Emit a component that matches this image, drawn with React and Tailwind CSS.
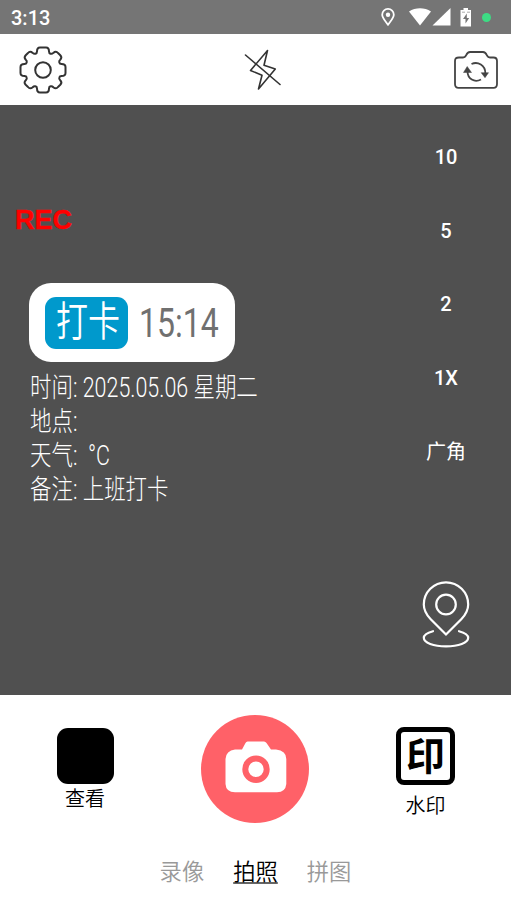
import { useState } from 'react'

const ZOOM_LEVELS = ['10', '5', '2', '1X', '广角']
const MODES = ['录像', '拍照', '拼图']
const INFO = ['时间: 2025.05.06 星期二', '地点:', '天气:  °C', '备注: 上班打卡']

function StatusBar() {
  return (
    <div className="flex h-[34px] items-center bg-[#757575] pl-[11px] pr-[20px] text-white">
      <span className="pt-px text-[20px] font-medium leading-none">3:13</span>
      <svg className="ml-auto h-[18px] w-[14px]" viewBox="0 0 14 18" fill="none" stroke="currentColor" strokeWidth="1.800">
        <path d="M7 16.700C4.200 12.800 1.200 9.800 1.200 6.700a5.800 5.800 0 0 1 11.600 0c0 3.100-3 6.100-5.800 10Z" />
        <circle cx="7" cy="6.700" r="2.200" fill="currentColor" stroke="none" />
      </svg>
      <svg className="ml-[14px] h-[18px] w-[42px]" viewBox="0 0 42 18" fill="currentColor">
        <path d="M0 3.500C6.500-.9 15.500-.9 22 3.500L11 17.500Z" />
        <path d="M41.500 0v17.500H23.500Z" />
      </svg>
      <svg className="ml-[9px] h-[19px] w-[12px]" viewBox="0 0 12 19">
        <path d="M3.500 0h4.500v2H11v16.500H.5V2h3Z" fill="#fff" />
        <path d="M6.800 5.500 3 11h2.500v4.500L9.200 10H6.800Z" fill="#757575" />
        <path d="M2 4.200h3M7 4.200h3" stroke="#757575" strokeWidth="0.600" />
      </svg>
      <span className="ml-[10px] h-[9px] w-[9px] rounded-full bg-[#3ddc84]" />
    </div>
  )
}

function GearIcon() {
  return (
    <svg className="h-[48px] w-[48px]" viewBox="0 0 48 48" fill="none" stroke="#333" strokeWidth="2" strokeLinejoin="round">
      <path d="M18 5.500Q18 1.500 21 1.500H27Q30 1.500 30 5.500Q30 7.300 31.500 7.700Q33 8.200 34.300 6.900Q37 4.500 39 7L41.300 9.300Q43.500 11.500 41.200 13.800Q39.800 15 40.300 16.500Q40.700 18 42.500 18Q46.500 18 46.500 21V27Q46.500 30 42.500 30Q40.700 30 40.300 31.500Q39.800 33 41.200 34.300Q43.500 36.500 41.300 38.800L39 41Q37 43.500 34.300 41.200Q33 39.800 31.500 40.300Q30 40.700 30 42.500Q30 46.500 27 46.500H21Q18 46.500 18 42.500Q18 40.700 16.500 40.300Q15 39.800 13.700 41.200Q11 43.500 9 41L6.700 38.800Q4.500 36.500 6.800 34.300Q8.200 33 7.700 31.500Q7.300 30 5.500 30Q1.500 30 1.500 27V21Q1.500 18 5.500 18Q7.300 18 7.700 16.500Q8.200 15 6.800 13.800Q4.500 11.500 6.700 9.300L9 7Q11 4.500 13.700 6.900Q15 8.200 16.500 7.700Q18 7.300 18 5.500Z" />
      <circle cx="24" cy="24" r="7.800" />
    </svg>
  )
}

function FlashOffIcon() {
  return (
    <svg className="h-[42px] w-[38px]" viewBox="0 0 38 42" fill="none" stroke="#333" strokeWidth="1.600" strokeLinejoin="round" strokeLinecap="round">
      <path d="M23.500 1.500 6.500 21.500 18 26.200 14.500 40 31.300 20 20 16.200Z" />
      <path d="M1.500 6 36 35.500" />
    </svg>
  )
}

function SwitchCameraIcon() {
  return (
    <svg className="h-[38px] w-[44px]" viewBox="0 0 44 38" fill="none" stroke="#444" strokeWidth="1.800" strokeLinejoin="round">
      <path d="M5 6.500H9Q11 6.500 12 4.500Q13.500 1 16 1H29Q31.500 1 33 4.500Q34 6.500 36 6.500H39.500Q43 6.500 43 10V33Q43 36.800 39.500 36.800H4.500Q1 36.800 1 33V10Q1 6.500 5 6.500Z" />
      <path d="M17.500 13C24 10 31.300 14.500 31.300 22M27 28.500C20.500 32 13.500 28 13.500 20" />
      <path d="M13.200 15.500 17.500 21.500H9.500ZM31 26.700 27.200 21.700H34.500Z" fill="#444" strokeWidth="0.500" />
    </svg>
  )
}

function LocationIcon() {
  return (
    <svg className="h-[68px] w-[48px]" viewBox="0 0 48 68" fill="none" stroke="#fff" strokeWidth="2.200" strokeLinecap="round">
      <path d="M24 54.500 8.500 39C4 34.300 1.800 29.500 1.800 24.500a22.200 22.200 0 0 1 44.400 0c0 5-2.200 9.800-6.700 14.500Z" />
      <circle cx="24" cy="24.500" r="9.800" />
      <path d="M11 51.200C5 52.800 1.800 55 1.800 57.800 1.800 62.800 11.500 66.300 24 66.300S46.200 62.800 46.200 57.800C46.200 55 43 52.800 37 51.200" />
    </svg>
  )
}

function ShutterIcon() {
  return (
    <svg className="h-[52px] w-[62px]" viewBox="0 0 62 52">
      <path d="M22.500.500H39Q40.500.500 41.500 2L46 8.500H51Q61.300 9.500 61.300 18V43Q60.500 51.200 52 51.200H10Q1 51.200.500 43V18Q1 9.500 10 8.500H17L20.500 2Q21.300.500 22.500.500Z" fill="#fff" />
      <circle cx="31" cy="28.200" r="10.700" fill="none" stroke="#ff6168" strokeWidth="6" />
    </svg>
  )
}

function Preview() {
  return (
    <main className="flex h-[590px] justify-between bg-[#505050] text-white">
      <div className="pl-[14px] pt-[99px]">
        <div className="h-[32px] pl-px font-['Liberation_Sans',Arial,sans-serif] text-[27px] font-bold leading-[32px] text-[#ff0000] [-webkit-text-stroke:0.4px_#ff0000]">REC</div>

        <div className="ml-[15px] mt-[47px] flex h-[79px] w-[206px] items-center rounded-[22px] bg-white pl-[16px]">
          <div className="h-[52px] w-[83px] rounded-[11px] bg-[#0099cc] pl-[11px]">
            <span className="block origin-left scale-x-[0.78] whitespace-nowrap text-[41px] font-[350] leading-[51px]">打卡</span>
          </div>
          <span className="ml-[11px] block origin-left scale-x-[0.78] whitespace-nowrap text-[41px] leading-[50px] text-[#707070]">15:14</span>
        </div>

        <div className="ml-[16px] mt-[9px] w-[240px]">
          {INFO.map(line => (
            <p key={line} className="origin-left scale-x-[0.795] whitespace-pre text-[27px] font-light leading-[34px]">{line}</p>
          ))}
        </div>
      </div>

      <div className="flex w-[130px] flex-col items-center pt-[15px]">
        {ZOOM_LEVELS.map(level => (
          <button key={level} className={`h-[73.7px] text-[20px] ${level === '广角' ? 'font-normal' : 'font-medium'}`}>{level}</button>
        ))}
        <div className="mt-[92px]">
          <LocationIcon />
        </div>
      </div>
    </main>
  )
}

export default function App() {
  const [mode, setMode] = useState('拍照')

  return (
    <div className="h-[908px] w-[511px] overflow-hidden bg-white font-[Roboto,'Noto_Sans_CJK_SC',sans-serif]">
      <StatusBar />

      <header className="flex h-[71px] items-center justify-between pl-[18.5px] pr-[13.5px]">
        <GearIcon />
        <div className="pl-[5px]"><FlashOffIcon /></div>
        <SwitchCameraIcon />
      </header>

      <Preview />

      <section className="flex h-[145px] items-start justify-between pl-[56px] pr-[56px] pt-[20px]">
        <button className="flex w-[58px] flex-col items-center pt-[13px] text-[20px] font-[350] leading-[31px]">
          <span className="h-[56px] w-[57px] rounded-[11px] bg-black" />
          查看
        </button>
        <button className="flex h-[108px] w-[108px] items-center justify-center rounded-full bg-[#ff6168] pb-[4px] pl-px">
          <ShutterIcon />
        </button>
        <button className="flex w-[59px] flex-col items-center pt-[12px] text-[20px] font-[350] leading-[30px]">
          <span className="mb-[6px] flex h-[58px] w-[59px] items-center justify-center rounded-[8px] border-[5px] border-black">
            <span className="pt-[2px] text-[39px] font-bold leading-none">印</span>
          </span>
          水印
        </button>
      </section>

      <nav className="flex justify-center gap-[29px] pt-[16px] text-[22.300px] font-[350] leading-[32px]">
        {MODES.map(m => (
          <button
            key={m}
            onClick={() => setMode(m)}
            className={m === mode ? 'text-black underline decoration-[#666] decoration-2 underline-offset-[2px] [text-decoration-skip-ink:none]' : 'text-[#999]'}
          >
            {m}
          </button>
        ))}
      </nav>
    </div>
  )
}
